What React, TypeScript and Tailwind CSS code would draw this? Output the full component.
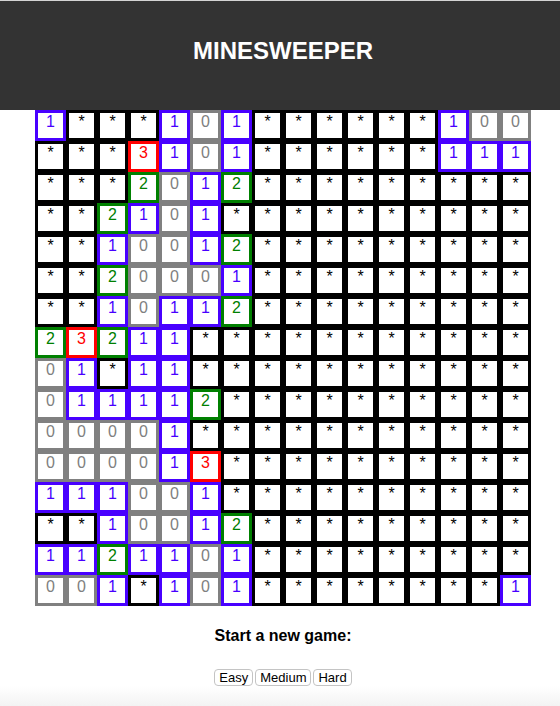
import React from "react";

const rows = [
  "1***101******100",
  "***3101******111",
  "***2012*********",
  "**2101**********",
  "**10012*********",
  "**20001*********",
  "**10112*********",
  "23211***********",
  "01*11***********",
  "011112**********",
  "00001***********",
  "000013**********",
  "111001**********",
  "**10012*********",
  "1121101*********",
  "001*101********1",
];

const styleFor: Record<string, string> = {
  "*": "border-black text-black",
  "0": "border-[#808080] text-[#808080]",
  "1": "border-[#4800ff] text-[#4800ff]",
  "2": "border-[#008000] text-[#008000]",
  "3": "border-[#ff0000] text-[#ff0000]",
};

export default function App() {
  return (
    <div
      className="min-h-[706px] bg-white"
      style={{ fontFamily: '"Liberation Sans", Arial, sans-serif' }}
    >
      <header className="h-[110px] bg-[#333333] border-t border-[#d4d4d4] pl-[6px] pt-[36px]">
        <h1 className="text-center text-white font-bold text-[24px] leading-[28px]">
          MINESWEEPER
        </h1>
      </header>
      <main className="flex flex-col items-center pl-[6px]">
        <div className="grid grid-cols-[repeat(16,31px)]">
          {rows.map((r, ri) =>
            r.split("").map((c, ci) => (
              <div
                key={ri + "-" + ci}
                className={
                  "w-[31px] h-[31px] box-border border-[3px] bg-white text-center text-[16px] leading-[18px] " +
                  styleFor[c]
                }
              >
                {c}
              </div>
            ))
          )}
        </div>
        <h2 className="mt-[21px] font-bold text-[16px] leading-[18px] text-black">
          Start a new game:
        </h2>
        <div className="mt-[24px] flex gap-[2px]">
          {["Easy", "Medium", "Hard"].map((b) => (
            <button
              key={b}
              className="h-[17px] px-[4px] border border-[#c4c4c4] rounded-[4px] bg-white text-[13px] leading-[15px] text-black"
            >
              {b}
            </button>
          ))}
        </div>
      </main>
      <div className="h-[20px] bg-gradient-to-b from-white to-[#f3f3f3]" />
    </div>
  );
}
